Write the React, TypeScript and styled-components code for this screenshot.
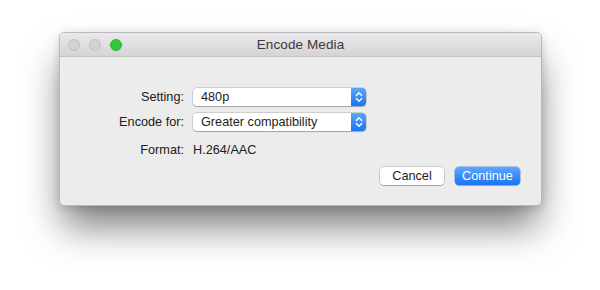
import React from "react";
import styled, { createGlobalStyle } from "styled-components";

const Global = createGlobalStyle`
  html, body { margin: 0; padding: 0; background: #ffffff; }
  body { font-family: "Liberation Sans", Arial, sans-serif; -webkit-font-smoothing: antialiased; }
  * { box-sizing: border-box; }
`;

const Page = styled.div`
  width: 600px;
  height: 290px;
  padding: 32px 0 0 59px;
  background: #ffffff;
  overflow: hidden;
`;

const Window = styled.div`
  width: 483px;
  height: 174px;
  background: #ececec;
  border-radius: 5px;
  border: 1px solid #b9b9b9;
  box-shadow: 0 24px 38px -4px rgba(0, 0, 0, 0.52), 0 2px 10px rgba(0, 0, 0, 0.15);
  display: flex;
  flex-direction: column;
  overflow: hidden;
`;

const TitleBar = styled.div`
  height: 24px;
  flex: none;
  position: relative;
  display: flex;
  align-items: center;
  justify-content: center;
  background: linear-gradient(#ebe9eb, #d5d3d5);
  border-bottom: 1px solid #c3c1c3;
`;

const Lights = styled.div`
  position: absolute;
  left: 8px;
  top: 6px;
  display: flex;
  gap: 9px;
`;

const Light = styled.span<{ $color: string; $border: string }>`
  width: 12px;
  height: 12px;
  border-radius: 50%;
  background: ${(p) => p.$color};
  border: 1px solid ${(p) => p.$border};
`;

const Title = styled.div`
  font-size: 13.5px;
  color: #3a3a3a;
  letter-spacing: 0.1px;
`;

const Body = styled.div`
  flex: 1;
  padding: 31px 21px 0 0;
  display: flex;
  flex-direction: column;
`;

const Form = styled.div`
  display: grid;
  grid-template-columns: 124px 173px;
  grid-template-rows: 18px 18px 20px;
  column-gap: 9px;
  row-gap: 7px;
  align-items: center;
`;

const Label = styled.div<{ $low?: boolean }>`
  text-align: right;
  font-size: 12.7px;
  color: #202020;
  padding-top: ${(p) => (p.$low ? 3 : 0)}px;
`;

const Value = styled.div`
  font-size: 12.7px;
  color: #202020;
  padding-top: 3px;
`;

const Popup = styled.div`
  height: 18px;
  display: flex;
  align-items: stretch;
  background: #ffffff;
  border-radius: 4px;
  box-shadow: 0 0 0 0.5px rgba(0, 0, 0, 0.25), 0 1px 1px rgba(0, 0, 0, 0.2);
`;

const PopupText = styled.div`
  flex: 1;
  padding-left: 8px;
  font-size: 12.7px;
  color: #1e1e1e;
  display: flex;
  align-items: center;
`;

const Stepper = styled.div`
  width: 15px;
  border-radius: 0 4px 4px 0;
  background: linear-gradient(#5aa6fb, #1c75f1);
  display: flex;
  align-items: center;
  justify-content: center;
`;

const Buttons = styled.div`
  margin-top: 9px;
  display: flex;
  justify-content: flex-end;
  gap: 11px;
`;

const Button = styled.button<{ $primary?: boolean }>`
  height: 18px;
  width: ${(p) => (p.$primary ? 65 : 64)}px;
  padding: 0;
  border: none;
  border-radius: 4px;
  font-family: inherit;
  font-size: 12.7px;
  color: ${(p) => (p.$primary ? "#ffffff" : "#1e1e1e")};
  background: ${(p) => (p.$primary ? "linear-gradient(#5ba8fc, #1a73f0)" : "#ffffff")};
  box-shadow: ${(p) =>
    p.$primary
      ? "0 0 0 0.5px rgba(20, 90, 220, 0.6), 0 1px 1px rgba(0, 0, 0, 0.15)"
      : "0 0 0 0.5px rgba(0, 0, 0, 0.25), 0 1px 1px rgba(0, 0, 0, 0.2)"};
`;

const Chevrons = () => (
  <svg width="8" height="12" viewBox="0 0 8 12" fill="none" stroke="#ffffff" strokeWidth="1.4" strokeLinecap="round" strokeLinejoin="round">
    <polyline points="1.3,4.5 4,1.8 6.7,4.5" />
    <polyline points="1.3,7.5 4,10.2 6.7,7.5" />
  </svg>
);

export default function App() {
  return (
    <Page>
      <Global />
      <Window>
        <TitleBar>
          <Lights>
            <Light $color="#d4d2d4" $border="#c2c0c2" />
            <Light $color="#d4d2d4" $border="#c2c0c2" />
            <Light $color="#2fc83f" $border="#27b536" />
          </Lights>
          <Title>Encode Media</Title>
        </TitleBar>
        <Body>
          <Form>
            <Label>Setting:</Label>
            <Popup>
              <PopupText>480p</PopupText>
              <Stepper><Chevrons /></Stepper>
            </Popup>
            <Label>Encode for:</Label>
            <Popup>
              <PopupText>Greater compatibility</PopupText>
              <Stepper><Chevrons /></Stepper>
            </Popup>
            <Label $low>Format:</Label>
            <Value>H.264/AAC</Value>
          </Form>
          <Buttons>
            <Button>Cancel</Button>
            <Button $primary>Continue</Button>
          </Buttons>
        </Body>
      </Window>
    </Page>
  );
}
